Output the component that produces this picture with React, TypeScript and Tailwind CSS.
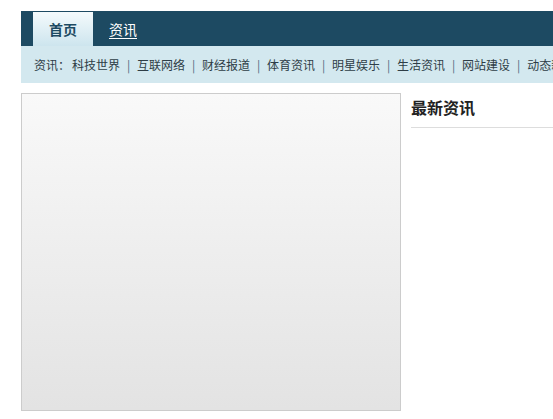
import React from "react"

const links = ["科技世界", "互联网络", "财经报道", "体育资讯", "明星娱乐", "生活资讯", "网站建设", "动态新闻"]

export default function App() {
  return (
    <div
      className="w-screen h-screen overflow-hidden bg-white pt-[11px] pl-[21px]"
      style={{ fontFamily: '"Noto Sans CJK SC", "Liberation Sans", sans-serif' }}
    >
      <div className="w-[960px]">
        {/* top nav */}
        <div className="h-[35px] bg-[#1d4a62] flex items-end pl-[12px]">
          <a className="w-[60px] h-[34px] flex items-center justify-center text-[14px] font-bold text-[#1d4a62] bg-gradient-to-b from-[#f4fafc] to-[#cde5ee]">
            首页
          </a>
          <a className="h-[34px] flex items-center ml-[16px] text-[14px] text-white underline underline-offset-[3px]">
            资讯
          </a>
        </div>

        {/* sub nav */}
        <div className="h-[37px] bg-[#d3e8ef] flex items-center pl-[13px] text-[12px] text-[#2e3d46] whitespace-nowrap">
          <span className="mr-[2px]">资讯：</span>
          {links.map((l, i) => (
            <React.Fragment key={l}>
              {i > 0 && <span className="w-[17px] text-center text-[#4d6c80]">|</span>}
              <span>{l}</span>
            </React.Fragment>
          ))}
        </div>

        {/* body */}
        <div className="flex mt-[10px]">
          <div className="w-[380px] h-[318px] border border-[#cccccc] bg-gradient-to-b from-[#f9f9f9] to-[#e3e3e3]" />
          <div className="ml-[10px] w-[300px]">
            <h2 className="h-[35px] leading-[28px] border-b border-[#dddddd] text-[16px] font-bold text-[#222]">
              最新资讯
            </h2>
          </div>
        </div>
      </div>
    </div>
  )
}
